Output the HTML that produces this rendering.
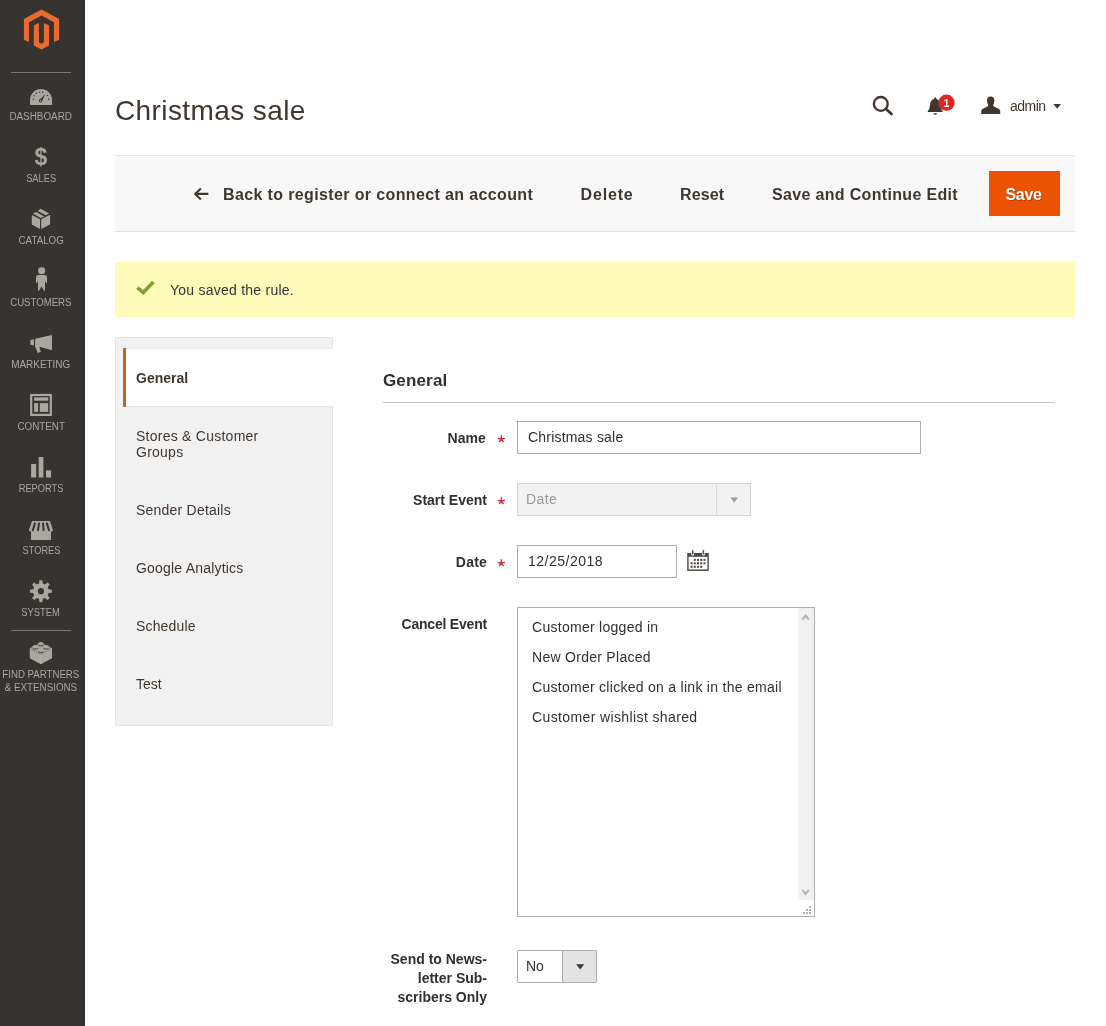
<!DOCTYPE html>
<html>
<head>
<meta charset="utf-8">
<title>Christmas sale</title>
<style>
*{box-sizing:border-box;margin:0;padding:0}
html,body{width:1106px;height:1026px;overflow:hidden;background:#fff}
body{font-family:"Liberation Sans",sans-serif;font-size:14px;color:#41362f;position:relative}
#wrap{position:absolute;left:0;top:0;width:1106px;height:1026px;will-change:transform}
.abs{position:absolute;white-space:nowrap}
/* sidebar */
#side{position:absolute;left:0;top:0;width:85px;height:1026px;background:#373330}
#side .sep{position:absolute;left:11px;width:60px;height:1px;background:#7b7570}
#side .lbl{position:absolute;left:0;width:82px;text-align:center;font-size:10px;line-height:13px;color:#aaa6a0;white-space:nowrap}
#side .lbl span{display:inline-block;transform-origin:50% 50%}
#side svg{position:absolute}
/* header */
#title{left:115px;top:93px;font-size:28px;line-height:36px;color:#41362f;letter-spacing:0.4px}
#admin{left:1010px;top:98px;font-size:14px;line-height:17px;color:#41362f;letter-spacing:-0.5px}
/* actions */
#bar{position:absolute;left:115px;top:155px;width:960px;height:77px;background:#f8f8f8;border-top:1px solid #e3e3e3;border-bottom:1px solid #e3e3e3}
.btn{font-size:16px;font-weight:700;line-height:20px;color:#41362f;top:185px}
#save{position:absolute;left:989px;top:171px;width:71px;height:45px;text-shadow:1px 1px 0 rgba(0,0,0,.25);background:#eb5202;color:#fff;font-size:16px;font-weight:700;line-height:48px;text-align:center;letter-spacing:-0.3px;padding-right:2px}
/* message */
#msg{position:absolute;left:115px;top:262px;width:960px;height:55px;background:#fffbbb}
#msgt{left:170px;top:282px;font-size:14px;line-height:17px;color:#333;letter-spacing:0.24px}
/* tabs */
#tabs{position:absolute;left:115px;top:337px;width:218px;height:389px;background:#f1f1f1;border:1px solid #e3e3e3}
#tabact{position:absolute;left:123px;top:348px;width:210px;height:59px;background:#fff;border-top:1px solid #e3e3e3;border-bottom:1px solid #e3e3e3}
.tab{left:136px;font-size:14px;line-height:16px;color:#41362f}
/* form */
#sect{left:383px;top:370px;letter-spacing:0.15px;font-size:17px;font-weight:700;line-height:22px;color:#303030}
#hr{position:absolute;left:383px;top:402px;width:672px;height:1px;background:#ccc6bd}
.flbl{position:absolute;right:619px;font-size:14px;font-weight:700;line-height:19px;color:#303030;text-align:right;white-space:nowrap}
.req{position:absolute;left:497px;font-size:14px;color:#e22626;line-height:16px}
.inp{position:absolute;left:517px;height:33px;background:#fff;border:1px solid #adadad;font-size:14px;line-height:31px;padding-left:10px;color:#303030;white-space:nowrap}
.opt{left:532px;font-size:14px;line-height:17px;color:#303030;letter-spacing:0.28px}
</style>
</head>
<body>
<div id="wrap">
<div id="side">
<svg width="85" height="1026" viewBox="0 0 85 1026" style="left:0;top:0">
<!-- logo -->
<g fill="#eb6a2f" transform="translate(23.9 9.4)">
<path d="M17.7 0 L0 9.65 V30.4 L5.1 32.7 V12.9 L17.7 6 L30.1 12.9 V32.7 L35.2 30.4 V9.65 Z"/>
<path d="M9.9 15.8 L15 13.5 V33 L17.7 34.4 L20 33 V13.5 L25.1 15.8 V36 L17.7 40.2 L9.9 36 Z"/>
</g>
<!-- dashboard -->
<path d="M30 104.2 V99.8 A11 10.8 0 0 1 52 99.8 V104.2 Q52 105 51.2 105 H30.8 Q30 105 30 104.2Z" fill="#aaa6a0"/>
<g fill="#373330"><circle cx="33.4" cy="99.2" r=".75"/><circle cx="34.1" cy="95.8" r=".75"/><circle cx="36.4" cy="93.3" r=".75"/><circle cx="39.6" cy="92.2" r=".75"/><circle cx="42.6" cy="92.2" r=".75"/><circle cx="47.5" cy="95.6" r=".75"/><circle cx="48.6" cy="99.2" r=".75"/>
<path d="M45.3 93.9 L41.8 101.6 L39.3 100.2 Z"/><circle cx="40.5" cy="100.8" r="1.7"/></g>
<circle cx="40.5" cy="100.8" r=".8" fill="#aaa6a0"/>
<!-- catalog -->
<g fill="#aaa6a0">
<path d="M37.8 210.9 L40.6 208.8 L49.1 213.4 L45.9 215.3Z"/>
<path d="M32.9 213.4 L36.1 211.9 L44.3 216.4 L40.6 218Z"/>
<path d="M31.8 215 L40 219.2 V229.1 L31.8 224.5Z"/>
<path d="M41.2 219.2 L50.1 214.8 V224.5 L41.2 229.1Z"/>
<!-- customers -->
<ellipse cx="41.6" cy="270.7" rx="3.6" ry="3.45"/>
<path d="M36 277.2 Q36 275 38.4 275 H44.6 Q47 275 47 277.2 V283.8 L45 281.2 V290.6 L44.2 291.1 L41.5 286.4 L38.8 291.1 L38 290.6 V281.2 L36 283.8Z"/>
<!-- marketing -->
<path d="M30.4 340.1 L33.9 339.2 V345.5 L30.4 344.8Z"/>
<path d="M35.1 338.8 L52 335 V350.2 L39.3 346.8 L40.9 351.8 L37.7 353.1 L35.1 346.4Z"/>
<!-- reports -->
<rect x="31.1" y="464" width="5.1" height="13.5"/><rect x="38.7" y="457" width="4.7" height="20.5"/><rect x="46" y="470.3" width="5.1" height="7.2"/>
<!-- stores -->
<path d="M32 521.1 H50 L53 530.2 Q52.6 531.6 51.1 531.6 H51 V540 H31 V531.6 H30.8 Q29.3 531.6 28.9 530.2Z"/>
</g>
<g stroke="#373330" stroke-width="2" stroke-linecap="round"><path d="M34.9 523.4 L32.8 530.2"/><path d="M39 523.4 L38 530.2"/><path d="M43 523.4 L43.6 530.2"/><path d="M46.9 523.4 L49 530.2"/></g>
<!-- content -->
<rect x="31.2" y="395" width="19.6" height="19.9" fill="none" stroke="#aaa6a0" stroke-width="2.2"/>
<g fill="#aaa6a0"><rect x="34.1" y="397.4" width="14.1" height="3.3"/><rect x="34.1" y="403.1" width="4" height="8.8"/><rect x="39.8" y="403.1" width="8.4" height="8.8"/>
<!-- system -->
<path fill-rule="evenodd" d="M38.99 583.53 L39.45 580.19 L42.35 580.19 L42.81 583.53 L44.97 584.43 L47.66 582.39 L49.71 584.44 L47.67 587.13 L48.57 589.29 L51.91 589.75 L51.91 592.65 L48.57 593.11 L47.67 595.27 L49.71 597.96 L47.66 600.01 L44.97 597.97 L42.81 598.87 L42.35 602.21 L39.45 602.21 L38.99 598.87 L36.83 597.97 L34.14 600.01 L32.09 597.96 L34.13 595.27 L33.23 593.11 L29.89 592.65 L29.89 589.75 L33.23 589.29 L34.13 587.13 L32.09 584.44 L34.14 582.39 L36.83 584.43Z M44 591.2 A3.1 3.1 0 1 0 37.8 591.2 A3.1 3.1 0 1 0 44 591.2Z"/>
<!-- lego -->
<path d="M29.8 648.2 L40.9 642.7 L52 648.2 V658.2 L40.9 664.2 L29.8 658.2Z"/>
</g>
<path d="M30.4 648.9 L40.9 654.4 L51.4 648.9" fill="none" stroke="#6f6a65" stroke-width=".8" stroke-dasharray="1.3 .7"/>
<path d="M40.9 654.6 V663.8" stroke="#bcb8b2" stroke-width=".8"/>
<g fill="#5a5550"><ellipse cx="40.9" cy="644.9" rx="2.9" ry="1.7"/><ellipse cx="35.4" cy="648.1" rx="2.9" ry="1.7"/><ellipse cx="46.2" cy="648.1" rx="2.9" ry="1.7"/><ellipse cx="40.9" cy="651.5" rx="2.9" ry="1.7"/></g>
<g fill="#aaa6a0"><ellipse cx="40.9" cy="643.6" rx="2.9" ry="1.7"/><ellipse cx="35.4" cy="646.8" rx="2.9" ry="1.7"/><ellipse cx="46.2" cy="646.8" rx="2.9" ry="1.7"/><ellipse cx="40.9" cy="650.2" rx="2.9" ry="1.7"/></g>
</svg>
<div class="abs" style="left:0;width:82px;top:144px;text-align:center;font-size:23px;font-weight:700;line-height:26px;color:#aaa6a0">$</div>
  <div class="sep" style="top:72px"></div>
  <div class="lbl" style="top:110px"><span style="transform:scaleX(0.988)">DASHBOARD</span></div>
  <div class="lbl" style="top:172px"><span style="transform:scaleX(0.928)">SALES</span></div>
  <div class="lbl" style="top:234px"><span style="transform:scaleX(0.975)">CATALOG</span></div>
  <div class="lbl" style="top:296px"><span style="transform:scaleX(0.961)">CUSTOMERS</span></div>
  <div class="lbl" style="top:358px"><span style="transform:scaleX(0.995)">MARKETING</span></div>
  <div class="lbl" style="top:420px"><span style="transform:scaleX(0.984)">CONTENT</span></div>
  <div class="lbl" style="top:482px"><span style="transform:scaleX(0.929)">REPORTS</span></div>
  <div class="lbl" style="top:544px"><span style="transform:scaleX(0.924)">STORES</span></div>
  <div class="lbl" style="top:606px"><span style="transform:scaleX(0.937)">SYSTEM</span></div>
  <div class="sep" style="top:630px"></div>
  <div class="lbl" style="top:668px"><span style="transform:scaleX(0.966)">FIND PARTNERS</span></div>
  <div class="lbl" style="top:681px"><span style="transform:scaleX(0.978)">&amp; EXTENSIONS</span></div>
</div>

<div id="title" class="abs">Christmas sale</div>
<div id="admin" class="abs">admin</div>
<svg class="abs" style="left:866px;top:90px" width="210" height="32" viewBox="866 90 210 32">
<!-- search -->
<circle cx="880.8" cy="103.9" r="6.9" fill="none" stroke="#41362f" stroke-width="2.3"/>
<path d="M886 109.1 L891.5 114.1" stroke="#41362f" stroke-width="2.7" stroke-linecap="round"/>
<!-- bell -->
<path d="M935.2 97.6 Q936.3 97.6 936.4 98.9 Q940.3 100.2 940.4 105 Q940.5 109 942.6 111 V111.9 H927.8 V111 Q929.9 109 930 105 Q930.1 100.2 934 98.9 Q934.1 97.6 935.2 97.6Z" fill="#41362f"/>
<path d="M933.2 113.2 H937.2 Q936.6 114.7 935.2 114.7 Q933.8 114.7 933.2 113.2Z" fill="#41362f"/>
<circle cx="946.5" cy="102.7" r="8.1" fill="#e22626"/>
<!-- user -->
<path d="M990.7 96.4 Q994.4 96.4 994.4 100.6 Q994.4 103 993.3 104.6 Q993 105.9 994 106.6 L999 109 Q1000.2 109.7 1000.2 111.2 V114 H981.2 V111.2 Q981.2 109.7 982.4 109 L987.4 106.6 Q988.4 105.9 988.1 104.6 Q987 103 987 100.6 Q987 96.4 990.7 96.4Z" fill="#41362f"/>
<!-- caret -->
<path d="M1053.4 104 H1061 L1057.2 108.8Z" fill="#41362f"/>
</svg>
<div class="abs" style="left:942px;top:97px;width:9px;text-align:center;font-size:10px;font-weight:700;line-height:13px;color:#fff">1</div>


<div id="bar"></div>
<div class="abs btn" style="left:223px;letter-spacing:0.37px">Back to register or connect an account</div>
<div class="abs btn" style="left:580.5px;letter-spacing:0.85px">Delete</div>
<div class="abs btn" style="left:680px;letter-spacing:0.1px">Reset</div>
<div class="abs btn" style="left:772px;letter-spacing:0.33px">Save and Continue Edit</div>
<div id="save">Save</div>

<svg class="abs" style="left:190px;top:184px" width="24" height="20" viewBox="190 184 24 20"><path d="M208.4 193.9 H195.6 M200.9 188.4 L195.2 193.9 L200.9 199.4" fill="none" stroke="#41362f" stroke-width="2.1" stroke-linejoin="miter"/></svg>
<div id="msg"></div>
<svg class="abs" style="left:132px;top:276px" width="28" height="24" viewBox="132 276 28 24"><path d="M137.4 287.6 L143.2 292.6 L153.4 282" fill="none" stroke="#79a22e" stroke-width="3.6"/></svg>
<div id="msgt" class="abs">You saved the rule.</div>

<div id="tabs"></div>
<div id="tabact"></div><div style="position:absolute;left:123px;top:348px;width:3px;height:59px;background:#c8602b"></div>
<div class="abs tab" style="top:370px;font-weight:700">General</div>
<div class="abs tab" style="top:428px;letter-spacing:0.25px">Stores &amp; Customer<br>Groups</div>
<div class="abs tab" style="top:502px;letter-spacing:0.22px">Sender Details</div>
<div class="abs tab" style="top:560px;letter-spacing:0.2px">Google Analytics</div>
<div class="abs tab" style="top:618px;letter-spacing:0.16px">Schedule</div>
<div class="abs tab" style="top:676px">Test</div>

<div id="sect" class="abs">General</div>
<div id="hr"></div>

<div class="flbl" style="top:429px;right:620px;letter-spacing:0.1px">Name</div><svg class="abs" style="left:495px;top:432.6px" width="13" height="12" viewBox="495 432.6 13 12"><path d="M501.3 438.6 V434.8 M501.3 438.6 L497.6 437.90000000000003 M501.3 438.6 L505.0 437.90000000000003 M501.3 438.6 L499.1 441.70000000000005 M501.3 438.6 L503.5 441.70000000000005" stroke="#c4323b" stroke-width="1.35" fill="none"/></svg>
<div class="inp" style="top:421px;width:404px;letter-spacing:0.2px">Christmas sale</div>

<div class="flbl" style="top:491px">Start Event</div><svg class="abs" style="left:495px;top:494.6px" width="13" height="12" viewBox="495 494.6 13 12"><path d="M501.3 500.6 V496.8 M501.3 500.6 L497.6 499.90000000000003 M501.3 500.6 L505.0 499.90000000000003 M501.3 500.6 L499.1 503.70000000000005 M501.3 500.6 L503.5 503.70000000000005" stroke="#c4323b" stroke-width="1.35" fill="none"/></svg>
<div class="inp" style="top:483px;width:234px;background:#f2f2f2;border-color:#d3d3d3;color:#9a9a9a;padding-left:8px;letter-spacing:0.4px">Date</div>
<div style="position:absolute;left:716px;top:484px;width:1px;height:31px;background:#d9d9d9"></div>
<svg class="abs" style="left:728px;top:495px" width="12" height="10" viewBox="728 495 12 10"><path d="M730.4 497.4 H738 L734.2 502.8Z" fill="#9b9b9b"/></svg>

<div class="flbl" style="top:553px;letter-spacing:0.2px">Date</div><svg class="abs" style="left:495px;top:556.6px" width="13" height="12" viewBox="495 556.6 13 12"><path d="M501.3 562.6 V558.8000000000001 M501.3 562.6 L497.6 561.9 M501.3 562.6 L505.0 561.9 M501.3 562.6 L499.1 565.7 M501.3 562.6 L503.5 565.7" stroke="#c4323b" stroke-width="1.35" fill="none"/></svg>
<div class="inp" style="top:545px;width:160px;letter-spacing:0.5px">12/25/2018</div>
<svg class="abs" style="left:685px;top:548px" width="26" height="25" viewBox="685 548 26 25">
<rect x="687.2" y="553" width="21.6" height="17.9" fill="#4d4844"/>
<rect x="688.6" y="556.8" width="18.8" height="12.6" fill="#fff"/>
<g fill="#fff"><rect x="691.3" y="551.6" width="2.8" height="4" rx="1.2"/><rect x="702" y="551.6" width="2.8" height="4" rx="1.2"/></g>
<g fill="#514943"><rect x="692" y="550" width="1.4" height="4.6" rx=".6"/><rect x="702.7" y="550" width="1.4" height="4.6" rx=".6"/>
<rect x="693.8" y="558.9" width="2" height="2"/><rect x="697" y="558.9" width="2" height="2"/><rect x="700.2" y="558.9" width="2" height="2"/><rect x="703.5" y="558.9" width="2" height="2"/>
<rect x="690.6" y="562.3" width="2" height="2"/><rect x="693.8" y="562.3" width="2" height="2"/><rect x="697" y="562.3" width="2" height="2"/><rect x="700.2" y="562.3" width="2" height="2"/><rect x="703.5" y="562.3" width="2" height="2"/>
<rect x="690.6" y="565.8" width="2" height="2"/><rect x="693.8" y="565.8" width="2" height="2"/><rect x="697" y="565.8" width="2" height="2"/><rect x="700.2" y="565.8" width="2" height="2"/></g>
</svg>

<div class="flbl" style="top:615px;letter-spacing:-0.2px">Cancel Event</div>
<div class="inp" style="top:607px;width:298px;height:310px;padding:0"></div>
<div style="position:absolute;left:798px;top:608px;width:16px;height:292px;background:#f1f1f1"></div>
<svg class="abs" style="left:798px;top:608px" width="16" height="308" viewBox="798 608 16 308">
<path d="M802.4 619.6 L805.6 615.6 L808.8 619.6" fill="none" stroke="#b2b2b2" stroke-width="2"/>
<path d="M802.4 890 L805.6 894 L808.8 890" fill="none" stroke="#b2b2b2" stroke-width="2"/>
<g fill="#b0b0b0"><rect x="809" y="906" width="2" height="2"/><rect x="806" y="909" width="2" height="2"/><rect x="809" y="909" width="2" height="2"/><rect x="803" y="912" width="2" height="2"/><rect x="806" y="912" width="2" height="2"/><rect x="809" y="912" width="2" height="2"/></g>
</svg>
<div class="abs opt" style="top:619px">Customer logged in</div>
<div class="abs opt" style="top:649px">New Order Placed</div>
<div class="abs opt" style="top:679px">Customer clicked on a link in the email</div>
<div class="abs opt" style="top:709px;letter-spacing:0.38px">Customer wishlist shared</div>

<div class="flbl" style="top:950px">Send to News-<br>letter Sub-<br>scribers Only</div>
<div class="inp" style="top:950px;width:80px;padding-left:8px;border-radius:1px">No</div>
<div style="position:absolute;left:562px;top:951px;width:34px;height:31px;background:#e3e3e3;border-left:1px solid #adadad"></div>
<svg class="abs" style="left:574px;top:962px" width="12" height="10" viewBox="574 962 12 10"><path d="M576.1 964.3 H584.3 L580.2 969.6Z" fill="#41362f"/></svg>
</div>
</body>
</html>
